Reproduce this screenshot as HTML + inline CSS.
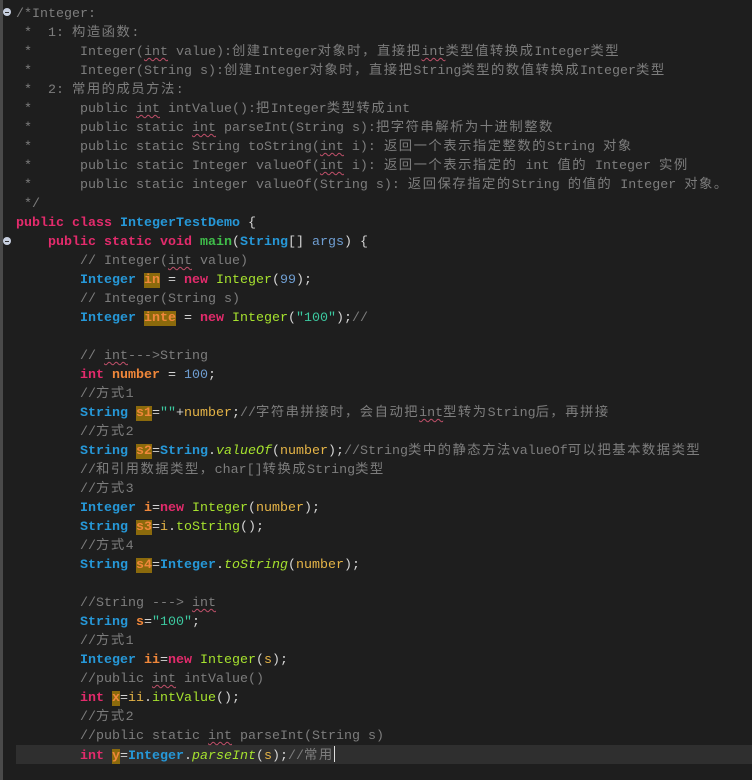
<!DOCTYPE html><html><head><meta charset="utf-8"><style>
body{margin:0;width:752px;height:780px;background:#1e1e1e;overflow:hidden;position:relative;font-family:"Liberation Mono","Noto Sans CJK SC",monospace;font-size:13.33px}
#g{position:absolute;left:0;top:0;width:3px;height:780px;background:#4a4a4a}
#code{position:absolute;left:16px;top:5px;white-space:pre;line-height:19px;color:#d4d4d4}
.l{height:19px}
.cur{position:absolute;left:16px;top:745px;width:736px;height:19px;background:#2f2f2f}
.c{color:#7d7d7d}.k{color:#e32b6c;font-weight:bold}.t{color:#2698d8;font-weight:bold}
.v{color:#f0873a;font-weight:bold}.n{color:#6f9ed2}.s{color:#3cc9a0}.f{color:#a6e22e}
.m{color:#3fbd4a;font-weight:bold}.a{color:#e5b447}.i{font-style:italic;color:#a6e22e}
.h{background:#8b6a0c}.w{text-decoration:underline wavy #c0506a;text-decoration-thickness:1px;text-underline-offset:2px}
.z{letter-spacing:1.5px}
.fold{position:absolute;left:3px;width:8px;height:8px;border-radius:50%;background:#c8d0e0}
.fold:after{content:"";position:absolute;left:2px;top:3.5px;width:4px;height:1px;background:#333}
.caret{display:inline-block;width:1px;height:16px;background:#ddd;vertical-align:-3px}
</style></head><body>
<div id="g"></div>
<div class="cur"></div>
<div class="fold" style="top:8px"></div>
<div class="fold" style="top:237px"></div>
<div id="code"><div class="l c">/*Integer:</div><div class="l c"> *  1: <span class="z">构造函数</span>:</div><div class="l c"> *      Integer(<span class="w">int</span> value):<span class="z">创建</span>Integer<span class="z">对象时，直接把</span><span class="w">int</span><span class="z">类型值转换成</span>Integer<span class="z">类型</span></div><div class="l c"> *      Integer(String s):<span class="z">创建</span>Integer<span class="z">对象时，直接把</span>String<span class="z">类型的数值转换成</span>Integer<span class="z">类型</span></div><div class="l c"> *  2: <span class="z">常用的成员方法</span>:</div><div class="l c"> *      public <span class="w">int</span> intValue():<span class="z">把</span>Integer<span class="z">类型转成</span>int</div><div class="l c"> *      public static <span class="w">int</span> parseInt(String s):<span class="z">把字符串解析为十进制整数</span></div><div class="l c"> *      public static String toString(<span class="w">int</span> i): <span class="z">返回一个表示指定整数的</span>String <span class="z">对象</span></div><div class="l c"> *      public static Integer valueOf(<span class="w">int</span> i): <span class="z">返回一个表示指定的</span> int <span class="z">值的</span> Integer <span class="z">实例</span></div><div class="l c"> *      public static integer valueOf(String s): <span class="z">返回保存指定的</span>String <span class="z">的值的</span> Integer <span class="z">对象。</span></div><div class="l c"> */</div><div class="l"><span class="k">public class</span> <span class="t">IntegerTestDemo</span> {</div><div class="l">    <span class="k">public static void</span> <span class="m">main</span>(<span class="t">String</span>[] <span class="n">args</span>) {</div><div class="l">        <span class="c">// Integer(<span class="w">int</span> value)</span></div><div class="l">        <span class="t">Integer</span> <span class="v h">in</span> = <span class="k">new</span> <span class="f">Integer</span>(<span class="n">99</span>);</div><div class="l">        <span class="c">// Integer(String s)</span></div><div class="l">        <span class="t">Integer</span> <span class="v h">inte</span> = <span class="k">new</span> <span class="f">Integer</span>(<span class="s">"100"</span>);<span class="c">//</span></div><div class="l"> </div><div class="l">        <span class="c">// <span class="w">int</span>--->String</span></div><div class="l">        <span class="k">int</span> <span class="v">number</span> = <span class="n">100</span>;</div><div class="l">        <span class="c">//<span class="z">方式</span>1</span></div><div class="l">        <span class="t">String</span> <span class="v h">s1</span>=<span class="s">""</span>+<span class="a">number</span>;<span class="c">//<span class="z">字符串拼接时，会自动把</span><span class="w">int</span><span class="z">型转为</span>String<span class="z">后，再拼接</span></span></div><div class="l">        <span class="c">//<span class="z">方式</span>2</span></div><div class="l">        <span class="t">String</span> <span class="v h">s2</span>=<span class="t">String</span>.<span class="i">valueOf</span>(<span class="a">number</span>);<span class="c">//String<span class="z">类中的静态方法</span>valueOf<span class="z">可以把基本数据类型</span></span></div><div class="l">        <span class="c">//<span class="z">和引用数据类型，</span>char[]<span class="z">转换成</span>String<span class="z">类型</span></span></div><div class="l">        <span class="c">//<span class="z">方式</span>3</span></div><div class="l">        <span class="t">Integer</span> <span class="v">i</span>=<span class="k">new</span> <span class="f">Integer</span>(<span class="a">number</span>);</div><div class="l">        <span class="t">String</span> <span class="v h">s3</span>=<span class="a">i</span>.<span class="f">toString</span>();</div><div class="l">        <span class="c">//<span class="z">方式</span>4</span></div><div class="l">        <span class="t">String</span> <span class="v h">s4</span>=<span class="t">Integer</span>.<span class="i">toString</span>(<span class="a">number</span>);</div><div class="l"> </div><div class="l">        <span class="c">//String ---> <span class="w">int</span></span></div><div class="l">        <span class="t">String</span> <span class="v">s</span>=<span class="s">"100"</span>;</div><div class="l">        <span class="c">//<span class="z">方式</span>1</span></div><div class="l">        <span class="t">Integer</span> <span class="v">ii</span>=<span class="k">new</span> <span class="f">Integer</span>(<span class="a">s</span>);</div><div class="l">        <span class="c">//public <span class="w">int</span> intValue()</span></div><div class="l">        <span class="k">int</span> <span class="v h">x</span>=<span class="a">ii</span>.<span class="f">intValue</span>();</div><div class="l">        <span class="c">//<span class="z">方式</span>2</span></div><div class="l">        <span class="c">//public static <span class="w">int</span> parseInt(String s)</span></div><div class="l">        <span class="k">int</span> <span class="v h">y</span>=<span class="t">Integer</span>.<span class="i">parseInt</span>(<span class="a">s</span>);<span class="c">//<span class="z">常用</span></span><span class="caret"></span></div></div>
</body></html>
